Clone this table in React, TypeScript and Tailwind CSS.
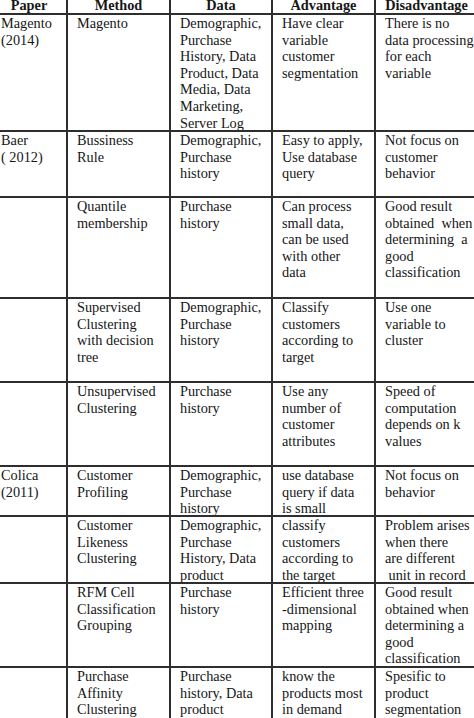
import React from 'react';

interface Row {
  height: string;
  paper: string[];
  method: string[];
  data: string[];
  advantage: string[];
  disadvantage: string[];
}

const rows: Row[] = [
  {
    height: 'h-[117px]',
    paper: ['Magento', '(2014)'],
    method: ['Magento'],
    data: ['Demographic,', 'Purchase', 'History, Data', 'Product, Data', 'Media, Data', 'Marketing,', 'Server Log'],
    advantage: ['Have clear', 'variable', 'customer', 'segmentation'],
    disadvantage: ['There is no', 'data processing', 'for each', 'variable'],
  },
  {
    height: 'h-[66px]',
    paper: ['Baer', '( 2012)'],
    method: ['Bussiness', 'Rule'],
    data: ['Demographic,', 'Purchase', 'history'],
    advantage: ['Easy to apply,', 'Use database', 'query'],
    disadvantage: ['Not focus on', 'customer', 'behavior'],
  },
  {
    height: 'h-[101px]',
    paper: [],
    method: ['Quantile', 'membership'],
    data: ['Purchase', 'history'],
    advantage: ['Can process', 'small data,', 'can be used', 'with other', 'data'],
    disadvantage: ['Good result', 'obtained\u00a0 when', 'determining\u00a0 a', 'good', 'classification'],
  },
  {
    height: 'h-[84px]',
    paper: [],
    method: ['Supervised', 'Clustering', 'with decision', 'tree'],
    data: ['Demographic,', 'Purchase', 'history'],
    advantage: ['Classify', 'customers', 'according to', 'target'],
    disadvantage: ['Use one', 'variable to', 'cluster'],
  },
  {
    height: 'h-[84px]',
    paper: [],
    method: ['Unsupervised', 'Clustering'],
    data: ['Purchase', 'history'],
    advantage: ['Use any', 'number of', 'customer', 'attributes'],
    disadvantage: ['Speed of', 'computation', 'depends on k', 'values'],
  },
  {
    height: 'h-[50px]',
    paper: ['Colica', '(2011)'],
    method: ['Customer', 'Profiling'],
    data: ['Demographic,', 'Purchase', 'history'],
    advantage: ['use database', 'query if data', 'is small'],
    disadvantage: ['Not focus on', 'behavior'],
  },
  {
    height: 'h-[67px]',
    paper: [],
    method: ['Customer', 'Likeness', 'Clustering'],
    data: ['Demographic,', 'Purchase', 'History, Data', 'product'],
    advantage: ['classify', 'customers', 'according to', 'the target'],
    disadvantage: ['Problem arises', 'when there', 'are different', '\u00a0unit in record'],
  },
  {
    height: 'h-[84px]',
    paper: [],
    method: ['RFM Cell', 'Classification', 'Grouping'],
    data: ['Purchase', 'history'],
    advantage: ['Efficient three', '-dimensional', 'mapping'],
    disadvantage: ['Good result', 'obtained when', 'determining a', 'good', 'classification'],
  },
  {
    height: 'h-[92px]',
    paper: [],
    method: ['Purchase', 'Affinity', 'Clustering'],
    data: ['Purchase', 'history, Data', 'product'],
    advantage: ['know the', 'products most', 'in demand'],
    disadvantage: ['Spesific to', 'product', 'segmentation'],
  },
];

const headers = ['Paper', 'Method', 'Data', 'Advantage', 'Disadvantage'];

const Cell: React.FC<{ lines: string[] }> = ({ lines }) => (
  <div className="border-r-2 border-[#2e2e2e] pl-[9px] pr-1 overflow-hidden whitespace-nowrap">
    {lines.map((line, i) => (
      <div key={i}>{line}</div>
    ))}
  </div>
);

const App: React.FC = () => {
  return (
    <div className="w-[474px] h-[718px] overflow-hidden bg-white">
      <div className="-mt-[4px] -ml-[8px] w-[490px] font-['Liberation_Serif','Times_New_Roman',serif] text-[14.3px] leading-[16.6px] text-[#161616]">
        <div className="grid grid-cols-[76px_103px_102px_103px_103px] h-[19px] border-b-2 border-[#2e2e2e] font-bold">
          {headers.map(h => (
            <div key={h} className="border-r-2 border-[#2e2e2e] pt-px text-center whitespace-nowrap">
              {h}
            </div>
          ))}
        </div>
        {rows.map((row, i) => (
          <div
            key={i}
            className={`grid grid-cols-[76px_103px_102px_103px_103px] border-b-2 border-[#2e2e2e] ${row.height}`}
          >
            <Cell lines={row.paper} />
            <Cell lines={row.method} />
            <Cell lines={row.data} />
            <Cell lines={row.advantage} />
            <Cell lines={row.disadvantage} />
          </div>
        ))}
      </div>
    </div>
  );
};

export default App;
